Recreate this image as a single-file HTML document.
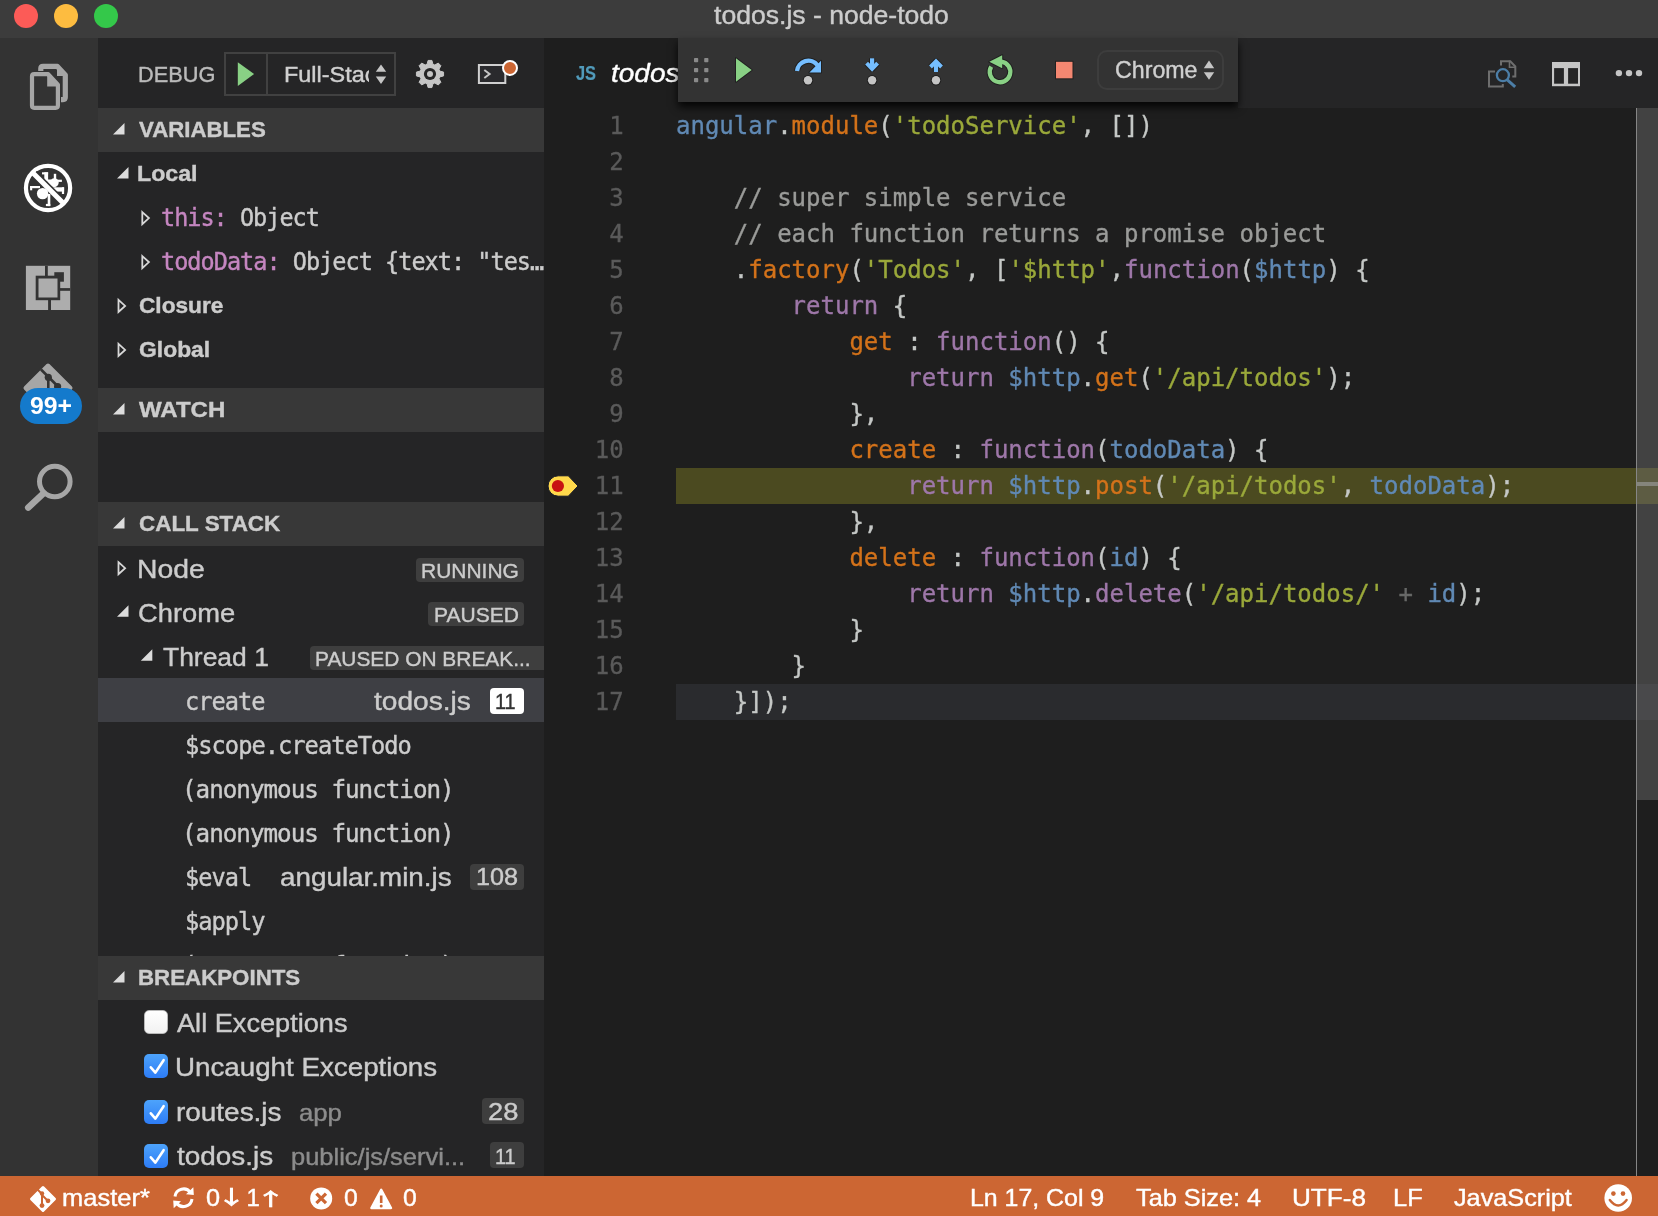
<!DOCTYPE html>
<html lang="en">
<head>
<meta charset="utf-8">
<title>todos.js - node-todo</title>
<style>
html,body{margin:0;padding:0;}
body{will-change:transform;width:1658px;height:1216px;overflow:hidden;position:relative;background:#1e1e1e;font-family:"Liberation Sans",sans-serif;color:#cccccc;}
*{box-sizing:border-box;}
.b{position:absolute;}
.t{position:absolute;white-space:nowrap;line-height:1;transform-origin:0 50%;-webkit-text-stroke:0.4px;}
svg{position:absolute;overflow:visible;}
.hdr{position:absolute;left:98px;width:446px;height:44px;background:#383838;}
.lbl{position:absolute;background:#3e3e3e;border-radius:4px;}
.cl{position:absolute;left:676px;height:36px;line-height:36px;font-family:"DejaVu Sans Mono","Liberation Mono",monospace;font-size:24px;white-space:pre;color:#c5c8c6;-webkit-text-stroke:0.35px;}
.ln{position:absolute;left:558.7px;width:65px;text-align:right;height:36px;line-height:36px;font-family:"DejaVu Sans Mono","Liberation Mono",monospace;font-size:24px;color:#5a5a5a;-webkit-text-stroke:0.3px;}
.v{color:#6089b4}.f{color:#d3721a}.s{color:#9aa83a}.k{color:#9e77a9}.c{color:#9a9b99}.o{color:#676867}
.cb{position:absolute;left:144px;width:24px;height:24px;border-radius:5px;}
.cb.on{background:linear-gradient(#4da3fb,#2d7cf6);}
.cb.off{background:linear-gradient(#ffffff,#f2f2f2);border:1px solid #b8b8b8;}
</style>
</head>
<body>
<!-- title bar -->
<div class="b" style="left:0;top:0;width:1658px;height:38px;background:#3c3c3c"></div>
<div class="b" style="left:14px;top:4px;width:24px;height:24px;border-radius:50%;background:#fc5b57"></div>
<div class="b" style="left:54px;top:4px;width:24px;height:24px;border-radius:50%;background:#fdbc40"></div>
<div class="b" style="left:94px;top:4px;width:24px;height:24px;border-radius:50%;background:#34c84a"></div>
<!-- activity bar -->
<div class="b" style="left:0;top:38px;width:98px;height:1138px;background:#333333"></div>
<svg style="left:0;top:0" width="98" height="1216" viewBox="0 0 98 1216">
<path d="M40.8 71 V68.6 Q40.8 66.4 43 66.4 H57.4 L65.3 75 V97.3 Q65.3 99.6 63 99.6 H61" fill="none" stroke="#a6a6a6" stroke-width="5.2" stroke-linejoin="round"/>
<path d="M57 64.5 L67.5 76 H57 Z" fill="#a6a6a6"/>
<path d="M34.2 74.2 H48.2 L57.9 84.6 V105.6 Q57.9 107.8 55.7 107.8 H34.2 Q32 107.8 32 105.6 V76.4 Q32 74.2 34.2 74.2 Z" fill="#333333" stroke="#a6a6a6" stroke-width="4.2" stroke-linejoin="round"/>
<path d="M47.2 73 V86.6 H59.5 Z" fill="#a6a6a6"/>

<circle cx="48.05" cy="188" r="22.1" fill="none" stroke="#ffffff" stroke-width="4.2"/>
<g fill="#ffffff" stroke="none">
<circle cx="42.6" cy="193.6" r="5.7"/>
<circle cx="54.3" cy="182.6" r="4.4"/>
<rect x="30.1" y="186" width="9.90" height="2.20"/><rect x="30.1" y="186" width="2.10" height="4.30"/>
<rect x="47.7" y="194" width="2.60" height="12.10"/><rect x="45.9" y="203.9" width="4.40" height="2.20"/>
<rect x="44.3" y="172.3" width="3.80" height="9.20"/><rect x="42" y="172.3" width="6.10" height="2.10"/>
<rect x="53.8" y="173.8" width="2.40" height="6.20"/>
<rect x="55" y="179.7" width="6.90" height="2.20"/>
<rect x="53" y="187.3" width="11.10" height="4.30"/><rect x="61.9" y="187.3" width="2.20" height="6.70"/>
<path d="M46 179.5 L51 179.5 L56 187.5 L50 186 Z"/>
</g>
<line x1="35.6" y1="172.2" x2="62.6" y2="199.2" stroke="#333333" stroke-width="3.2"/>
<line x1="33" y1="173" x2="63.1" y2="203.1" stroke="#ffffff" stroke-width="5"/>

<rect x="25.9" y="265.8" width="44.3" height="44.2" fill="#adadad"/>
<g fill="#333333">
<rect x="45.0" y="265.8" width="2.80" height="10.20"/>
<rect x="54.3" y="272.2" width="9.60" height="9.50"/>
<rect x="60" y="288.1" width="10.20" height="2.70"/>
<rect x="48.1" y="300" width="2.90" height="10.00"/>
<rect x="35.7" y="275.7" width="24.50" height="24.50"/>
</g>
<rect x="38.5" y="278.5" width="19" height="19" fill="#adadad"/>

<path d="M48 365.5 L70.5 388 L48 410.5 L25.5 388 Z" fill="#a6a6a6" stroke="#a6a6a6" stroke-width="4" stroke-linejoin="round"/>
<g stroke="#333333" stroke-width="2.6" fill="none"><path d="M41 369.5 L58 386.5"/><path d="M48.3 377 V400"/></g>
<circle cx="48.3" cy="377.3" r="3.6" fill="#333333"/><circle cx="57.6" cy="386.6" r="3.6" fill="#333333"/>
<rect x="20" y="388" width="62" height="36" rx="18" fill="#147acc"/>

<circle cx="54.8" cy="481.5" r="15.3" fill="none" stroke="#a6a6a6" stroke-width="5"/>
<line x1="43.2" y1="493.6" x2="28.2" y2="507.6" stroke="#a6a6a6" stroke-width="6.5" stroke-linecap="round"/>
</svg>
<!-- sidebar -->
<div class="b" style="left:98px;top:38px;width:446px;height:1138px;background:#252526"></div>
<div class="hdr" style="top:108px"></div>
<div class="hdr" style="top:388px"></div>
<div class="hdr" style="top:502px"></div>
<div class="b" style="left:98px;top:678px;width:446px;height:44px;background:#3e3f44"></div>
<!-- debug start box -->
<div class="b" style="left:224px;top:51.8px;width:172.2px;height:44px;border:2px solid #414141"></div>
<div class="b" style="left:266px;top:52px;width:2px;height:43.6px;background:#414141"></div>
<div class="b" style="left:0;top:0;width:368.8px;height:110px;overflow:hidden"><div class="t" style="left:284.4px;top:64px;font-size:22px;color:#d0d0d0;transform:scaleX(1.064);">Full-Stack</div></div>
<svg style="left:0;top:0" width="560" height="110" viewBox="0 0 560 110">
<path d="M237.8 62.2 V86 L254.1 74.1 Z" fill="#89d185"/>
<path d="M381 64.4 L386.2 71.7 H375.8 Z M381 83.9 L386.2 76.6 H375.8 Z" fill="#c5c5c5"/>
<path d="M427.08 64.23 L428.09 60.43 L431.91 60.43 L432.92 64.23 L434.85 65.03 L438.24 63.06 L440.94 65.76 L438.97 69.15 L439.77 71.08 L443.57 72.09 L443.57 75.91 L439.77 76.92 L438.97 78.85 L440.94 82.24 L438.24 84.94 L434.85 82.97 L432.92 83.77 L431.91 87.57 L428.09 87.57 L427.08 83.77 L425.15 82.97 L421.76 84.94 L419.06 82.24 L421.03 78.85 L420.23 76.92 L416.43 75.91 L416.43 72.09 L420.23 71.08 L421.03 69.15 L419.06 65.76 L421.76 63.06 L425.15 65.03 Z" fill="#c5c5c5" stroke="#c5c5c5" stroke-width="1" stroke-linejoin="round"/><circle cx="430" cy="74" r="6.1" fill="#252526"/><circle cx="430" cy="74" r="3" fill="#c5c5c5"/>
<rect x="478.9" y="65" width="26.4" height="18" fill="#2a2a2d" stroke="#d0d0d0" stroke-width="2"/>
<path d="M484.3 70 L489.6 74 L484.3 78" fill="none" stroke="#c5c5c5" stroke-width="2"/>
<circle cx="510" cy="67.9" r="7" fill="#cc6633" stroke="#ffffff" stroke-width="2"/>
</svg>
<!-- labels -->
<div class="lbl" style="left:416px;top:558px;width:108px;height:24px"></div>
<div class="lbl" style="left:428px;top:602px;width:96px;height:24px"></div>
<div class="lbl" style="left:310px;top:646px;width:240px;height:24px"></div>
<div class="lbl" style="left:490px;top:688px;width:34px;height:25.5px;background:#ffffff"></div>
<div class="lbl" style="left:470px;top:864px;width:54px;height:25.5px"></div>
<div class="t" style="left:714.1px;top:2px;font-size:26px;color:#cccccc;transform:scaleX(1.022);">todos.js - node-todo</div>
<div class="t" style="left:137.5px;top:64px;font-size:22px;color:#bbbbbb;transform:scaleX(0.988);">DEBUG</div>
<div class="t" style="left:138.5px;top:119px;font-size:22px;color:#cccccc;font-weight:bold;transform:scaleX(1.010);">VARIABLES</div>
<div class="t" style="left:138.5px;top:399px;font-size:22px;color:#cccccc;font-weight:bold;transform:scaleX(1.091);">WATCH</div>
<div class="t" style="left:138.5px;top:513px;font-size:22px;color:#cccccc;font-weight:bold;transform:scaleX(1.020);">CALL STACK</div>
<div class="t" style="left:137.4px;top:163px;font-size:22px;color:#cccccc;font-weight:bold;transform:scaleX(1.053);">Local</div>
<div class="t" style="left:138.5px;top:295px;font-size:22px;color:#cccccc;font-weight:bold;transform:scaleX(1.030);">Closure</div>
<div class="t" style="left:138.5px;top:339px;font-size:22px;color:#cccccc;font-weight:bold;transform:scaleX(1.040);">Global</div>
<div class="t" style="left:161.4px;top:206px;font-size:24px;color:#cccccc;font-family:'DejaVu Sans Mono','Liberation Mono',monospace;letter-spacing:-1.0px;transform:scaleX(0.978);"><span style="color:#c586c0">this:</span> Object</div>
<div class="t" style="left:161.4px;top:250px;font-size:24px;color:#cccccc;font-family:'DejaVu Sans Mono','Liberation Mono',monospace;letter-spacing:-1.0px;transform:scaleX(0.980);"><span style="color:#c586c0">todoData:</span> Object {text: "tes…</div>
<div class="t" style="left:136.6px;top:556px;font-size:26px;color:#cccccc;transform:scaleX(1.090);">Node</div>
<div class="t" style="left:137.7px;top:600px;font-size:26px;color:#cccccc;transform:scaleX(1.051);">Chrome</div>
<div class="t" style="left:163.0px;top:644px;font-size:26px;color:#cccccc;transform:scaleX(1.017);">Thread 1</div>
<div class="t" style="left:421.2px;top:561px;font-size:20.8px;color:#cccccc;transform:scaleX(1.008);">RUNNING</div>
<div class="t" style="left:434.2px;top:605px;font-size:20.8px;color:#cccccc;transform:scaleX(1.010);">PAUSED</div>
<div class="t" style="left:314.8px;top:649px;font-size:20.8px;color:#cccccc;transform:scaleX(1.005);">PAUSED ON BREAK...</div>
<div class="t" style="left:184.9px;top:690px;font-size:24px;color:#cccccc;font-family:'DejaVu Sans Mono','Liberation Mono',monospace;letter-spacing:-1.0px;transform:scaleX(0.986);">create</div>
<div class="t" style="left:373.6px;top:688px;font-size:26px;color:#cccccc;transform:scaleX(1.080);">todos.js</div>
<div class="t" style="left:495.4px;top:691px;font-size:22px;color:#333333;transform:scaleX(0.905);">11</div>
<div class="t" style="left:184.9px;top:734px;font-size:24px;color:#cccccc;font-family:'DejaVu Sans Mono','Liberation Mono',monospace;letter-spacing:-1.0px;transform:scaleX(0.988);">$scope.createTodo</div>
<div class="t" style="left:181.8px;top:778px;font-size:24px;color:#cccccc;font-family:'DejaVu Sans Mono','Liberation Mono',monospace;letter-spacing:-1.0px;transform:scaleX(1.010);">(anonymous function)</div>
<div class="t" style="left:181.8px;top:822px;font-size:24px;color:#cccccc;font-family:'DejaVu Sans Mono','Liberation Mono',monospace;letter-spacing:-1.0px;transform:scaleX(1.010);">(anonymous function)</div>
<div class="t" style="left:184.9px;top:866px;font-size:24px;color:#cccccc;font-family:'DejaVu Sans Mono','Liberation Mono',monospace;letter-spacing:-1.0px;transform:scaleX(0.983);">$eval</div>
<div class="t" style="left:280.2px;top:864px;font-size:26px;color:#cccccc;transform:scaleX(1.070);">angular.min.js</div>
<div class="t" style="left:475.7px;top:866px;font-size:23.4px;color:#cccccc;transform:scaleX(1.078);">108</div>
<div class="t" style="left:184.9px;top:910px;font-size:24px;color:#cccccc;font-family:'DejaVu Sans Mono','Liberation Mono',monospace;letter-spacing:-1.0px;transform:scaleX(0.986);">$apply</div>
<div class="t" style="left:181.8px;top:954px;font-size:24px;color:#cccccc;font-family:'DejaVu Sans Mono','Liberation Mono',monospace;letter-spacing:-1.0px;transform:scaleX(1.010);">(anonymous function)</div>
<svg style="left:0;top:0" width="560" height="1216" viewBox="0 0 560 1216"><polygon points="124.5,123 124.5,134.5 113,134.5" fill="#dcdcdc"/><polygon points="128.5,167 128.5,178.5 117,178.5" fill="#dcdcdc"/><path d="M142.3 212.1 L148.9 218.1 L142.3 224.1 Z" fill="none" stroke="#d8d8d8" stroke-width="1.8" stroke-linejoin="miter"/><path d="M142.3 256.09999999999997 L148.9 262.09999999999997 L142.3 268.09999999999997 Z" fill="none" stroke="#d8d8d8" stroke-width="1.8" stroke-linejoin="miter"/><path d="M118.5 299.9 L125.1 305.9 L118.5 311.9 Z" fill="none" stroke="#d8d8d8" stroke-width="1.8" stroke-linejoin="miter"/><path d="M118.5 343.9 L125.1 349.9 L118.5 355.9 Z" fill="none" stroke="#d8d8d8" stroke-width="1.8" stroke-linejoin="miter"/><polygon points="124.5,403 124.5,414.5 113,414.5" fill="#dcdcdc"/><polygon points="124.5,517 124.5,528.5 113,528.5" fill="#dcdcdc"/><path d="M118.5 562.1999999999999 L125.1 568.1999999999999 L118.5 574.1999999999999 Z" fill="none" stroke="#d8d8d8" stroke-width="1.8" stroke-linejoin="miter"/><polygon points="128.5,605.3 128.5,616.8 117,616.8" fill="#dcdcdc"/><polygon points="152.3,649.3 152.3,660.8 140.8,660.8" fill="#dcdcdc"/></svg>
<!-- breakpoints section -->
<div class="hdr" style="top:956px"></div>
<div class="b" style="left:98px;top:1000px;width:446px;height:176px;background:#252526"></div>
<div class="cb off" style="top:1010px"></div>
<div class="cb on" style="top:1054px"></div>
<div class="cb on" style="top:1100px"></div>
<div class="cb on" style="top:1144px"></div>
<div class="lbl" style="left:482px;top:1098px;width:42px;height:25.5px"></div>
<div class="lbl" style="left:490px;top:1142px;width:34px;height:25.5px"></div>
<svg style="left:0;top:0" width="560" height="1216" viewBox="0 0 560 1216"><path d="M150.8 1067.3 L155.4 1072.6 L163.6 1060.2" fill="none" stroke="#ffffff" stroke-width="2.6" stroke-linecap="round" stroke-linejoin="round"/><path d="M150.8 1113.3 L155.4 1118.6 L163.6 1106.2" fill="none" stroke="#ffffff" stroke-width="2.6" stroke-linecap="round" stroke-linejoin="round"/><path d="M150.8 1157.3 L155.4 1162.6 L163.6 1150.2" fill="none" stroke="#ffffff" stroke-width="2.6" stroke-linecap="round" stroke-linejoin="round"/></svg>
<svg style="left:0;top:0" width="560" height="1216" viewBox="0 0 560 1216"><polygon points="124.5,971 124.5,982.5 113,982.5" fill="#dcdcdc"/></svg>
<!-- editor -->
<div class="b" style="left:544px;top:38px;width:1114px;height:70px;background:#252526"></div>
<div class="b" style="left:544px;top:38px;width:694px;height:70px;background:#1e1e1e"></div>
<div class="t" style="left:575.6px;top:63px;font-size:20.5px;color:#519aba;font-weight:bold;transform:scaleX(0.800);-webkit-text-stroke:0.2px;">JS</div>
<div class="t" style="left:610.6px;top:60px;font-size:26px;color:#ffffff;font-style:italic;transform:scaleX(1.077);">todos.js</div>
<svg style="left:0;top:0" width="1658" height="110" viewBox="0 0 1658 110">
<path d="M1501 65.5 V61.2 H1510.3 L1515.3 66.5 V76.6 H1512.3" fill="none" stroke="#6e6e6e" stroke-width="2"/>
<path d="M1509.5 60.5 V67.3 H1516" fill="none" stroke="#6e6e6e" stroke-width="1.6"/>
<path d="M1495 71.4 H1489 V86.6 H1502.8 V84" fill="none" stroke="#6e6e6e" stroke-width="2"/>
<circle cx="1502.9" cy="75.2" r="6" fill="none" stroke="#4c7ea7" stroke-width="2.3"/>
<line x1="1507.3" y1="79.8" x2="1515.2" y2="86.8" stroke="#4c7ea7" stroke-width="3"/>
<rect x="1552" y="62" width="28" height="24.2" fill="#c5c5c5"/>
<rect x="1554.1" y="68.1" width="9.8" height="15.6" fill="#252526"/>
<rect x="1568.1" y="68.1" width="9.9" height="15.6" fill="#252526"/>
<circle cx="1618.9" cy="73.1" r="3.2" fill="#c5c5c5"/><circle cx="1629" cy="73.1" r="3.2" fill="#c5c5c5"/><circle cx="1639" cy="73.1" r="3.2" fill="#c5c5c5"/>
</svg>
<div class="b" style="left:544px;top:108px;width:1114px;height:1068px;background:#1e1e1e;overflow:hidden"></div>
<div class="b" style="left:676px;top:468px;width:982px;height:36px;background:#4b4a20"></div>
<div class="b" style="left:676px;top:684px;width:982px;height:36px;background:#2a2b2e"></div>
<div class="ln" style="top:108px">1</div><div class="cl" style="top:108px"><span class="v">angular</span>.<span class="f">module</span>(<span class="s">'todoService'</span>, [])</div>
<div class="ln" style="top:144px">2</div><div class="cl" style="top:144px"></div>
<div class="ln" style="top:180px">3</div><div class="cl" style="top:180px">    <span class="c">// super simple service</span></div>
<div class="ln" style="top:216px">4</div><div class="cl" style="top:216px">    <span class="c">// each function returns a promise object</span></div>
<div class="ln" style="top:252px">5</div><div class="cl" style="top:252px">    .<span class="f">factory</span>(<span class="s">'Todos'</span>, [<span class="s">'$http'</span>,<span class="k">function</span>(<span class="v">$http</span>) {</div>
<div class="ln" style="top:288px">6</div><div class="cl" style="top:288px">        <span class="k">return</span> {</div>
<div class="ln" style="top:324px">7</div><div class="cl" style="top:324px">            <span class="f">get</span> : <span class="k">function</span>() {</div>
<div class="ln" style="top:360px">8</div><div class="cl" style="top:360px">                <span class="k">return</span> <span class="v">$http</span>.<span class="f">get</span>(<span class="s">'/api/todos'</span>);</div>
<div class="ln" style="top:396px">9</div><div class="cl" style="top:396px">            },</div>
<div class="ln" style="top:432px">10</div><div class="cl" style="top:432px">            <span class="f">create</span> : <span class="k">function</span>(<span class="v">todoData</span>) {</div>
<div class="ln" style="top:468px">11</div><div class="cl" style="top:468px">                <span class="k">return</span> <span class="v">$http</span>.<span class="f">post</span>(<span class="s">'/api/todos'</span>, <span class="v">todoData</span>);</div>
<div class="ln" style="top:504px">12</div><div class="cl" style="top:504px">            },</div>
<div class="ln" style="top:540px">13</div><div class="cl" style="top:540px">            <span class="f">delete</span> : <span class="k">function</span>(<span class="v">id</span>) {</div>
<div class="ln" style="top:576px">14</div><div class="cl" style="top:576px">                <span class="k">return</span> <span class="v">$http</span>.<span class="k">delete</span>(<span class="s">'/api/todos/'</span> <span class="o">+</span> <span class="v">id</span>);</div>
<div class="ln" style="top:612px">15</div><div class="cl" style="top:612px">            }</div>
<div class="ln" style="top:648px">16</div><div class="cl" style="top:648px">        }</div>
<div class="ln" style="top:684px">17</div><div class="cl" style="top:684px">    }]);</div>

<svg style="left:0;top:0" width="700" height="600" viewBox="0 0 700 600">
<path d="M558.2 475.8 H568.3 L578 486 L568.3 496.2 H558.2 A10.2 10.2 0 0 1 558.2 475.8 Z" fill="#ffd84b" stroke="#141828" stroke-width="1"/>
<circle cx="557.9" cy="486" r="6.1" fill="#c81212"/>
</svg>
<!-- scrollbar -->
<div class="b" style="left:1636px;top:108px;width:22px;height:692px;background:rgba(121,121,121,0.4)"></div>
<div class="b" style="left:1636px;top:482px;width:22px;height:4px;background:#85857c"></div>
<div class="b" style="left:1635.8px;top:108px;width:1.3px;height:1068px;background:#868686"></div>
<!-- debug toolbar -->
<div class="b" style="left:678px;top:38px;width:560px;height:63.5px;background:#333333;box-shadow:0 5px 8px rgba(0,0,0,0.85)"></div>
<div class="b" style="left:1096.5px;top:50px;width:127px;height:39.7px;border:2px solid #3d3d3d;border-radius:10px"></div>
<svg style="left:0;top:0" width="1300" height="110" viewBox="0 0 1300 110">
<rect x="694" y="58" width="4.2" height="4.2" rx="0.8" fill="#8a8a8a"/><rect x="694" y="68" width="4.2" height="4.2" rx="0.8" fill="#8a8a8a"/><rect x="694" y="78" width="4.2" height="4.2" rx="0.8" fill="#8a8a8a"/><rect x="704.2" y="58" width="4.2" height="4.2" rx="0.8" fill="#8a8a8a"/><rect x="704.2" y="68" width="4.2" height="4.2" rx="0.8" fill="#8a8a8a"/><rect x="704.2" y="78" width="4.2" height="4.2" rx="0.8" fill="#8a8a8a"/>
<g fill="none" stroke="#202020" stroke-linejoin="round">
<path d="M797 71 A11.4 11.4 0 0 1 817.5 65.3" stroke-width="6.3"/>
<path d="M821 60.8 V72.5 H809.4 Z" stroke-width="2" fill="#202020"/>
<circle cx="808" cy="80.2" r="5.2" fill="#202020" stroke="none"/>
<path d="M872.1 58.3 V68" stroke-width="6.2"/><path d="M866.6 63.2 L872.1 68.8 L877.6 63.2" stroke-width="6"/>
<circle cx="872.1" cy="80.2" r="5.2" fill="#202020" stroke="none"/>
<path d="M936 72 V62" stroke-width="6.2"/><path d="M930.5 67 L936 61.4 L941.5 67" stroke-width="6"/>
<circle cx="936" cy="80.2" r="5.2" fill="#202020" stroke="none"/>
<path d="M1001.5 61.7 A10.3 10.3 0 1 1 991.2 66.6" stroke-width="6.3"/>
<path d="M989.3 61.8 L1002.2 55.2 V68.2 Z" stroke-width="2" fill="#202020"/>
<rect x="1055" y="60.8" width="18.5" height="18.5" fill="#202020" stroke="none"/>
<path d="M736 58.2 V81.7 L751.7 70 Z" stroke-width="2" fill="#202020"/>
</g>
<path d="M736 58.2 V81.7 L751.7 70 Z" fill="#89d185"/>
<path d="M797 71 A11.4 11.4 0 0 1 817.5 65.3" fill="none" stroke="#75beff" stroke-width="4.3"/>
<path d="M821 60.8 V72.5 H809.4 Z" fill="#75beff"/>
<circle cx="808" cy="80.2" r="4.2" fill="#c5c5c5"/><path d="M872.1 58.3 V68" fill="none" stroke="#75beff" stroke-width="4.2"/>
<path d="M866.6 63.2 L872.1 68.8 L877.6 63.2" fill="none" stroke="#75beff" stroke-width="4"/>
<circle cx="872.1" cy="80.2" r="4.2" fill="#c5c5c5"/><path d="M936 72 V62" fill="none" stroke="#75beff" stroke-width="4.2"/>
<path d="M930.5 67 L936 61.4 L941.5 67" fill="none" stroke="#75beff" stroke-width="4"/>
<circle cx="936" cy="80.2" r="4.2" fill="#c5c5c5"/><path d="M1001.5 61.7 A10.3 10.3 0 1 1 991.2 66.6" fill="none" stroke="#89d185" stroke-width="4.3"/>
<path d="M989.3 61.8 L1002.2 55.2 V68.2 Z" fill="#89d185"/>
<rect x="1056" y="61.8" width="16.5" height="16.5" fill="#f48771"/>
<path d="M1209 60.5 L1214.2 68.2 H1203.8 Z M1209 79.8 L1214.2 72.3 H1203.8 Z" fill="#c5c5c5"/>
</svg>
<!-- status bar -->
<div class="b" style="left:0;top:1176px;width:1658px;height:40px;background:#cc6633"></div>
<svg style="left:0;top:0" width="1658" height="1216" viewBox="0 0 1658 1216">
<path d="M43 1187.5 L54.5 1199 L43 1210.5 L31.5 1199 Z" fill="#ffffff" stroke="#ffffff" stroke-width="3" stroke-linejoin="round"/>
<g stroke="#cc6633" stroke-width="2" fill="none"><path d="M42 1192 V1206"/><path d="M37.5 1189.5 L42 1194"/><path d="M42 1195 L47.5 1200.5"/></g>
<circle cx="42" cy="1205.6" r="2.4" fill="#cc6633"/><circle cx="48" cy="1200.8" r="2.4" fill="#cc6633"/><circle cx="42" cy="1193.5" r="2.2" fill="#cc6633"/>
<g fill="none" stroke="#ffffff" stroke-width="3">
<path d="M175 1196.5 A8.6 8.6 0 0 1 190.5 1192.5"/>
<path d="M192 1199 A8.6 8.6 0 0 1 176.5 1203"/>
</g>
<path d="M186 1194.3 L193.8 1195 L193.3 1187.2 Z" fill="#ffffff"/>
<path d="M181 1201.2 L173.2 1200.5 L173.7 1208.3 Z" fill="#ffffff"/>
<circle cx="321.2" cy="1198.4" r="11" fill="#ffffff"/>
<path d="M316.4 1193.6 L326 1203.2 M326 1193.6 L316.4 1203.2" stroke="#cc6633" stroke-width="3.2" fill="none"/>
<path d="M381.2 1189.8 L391 1208 H371.4 Z" fill="#ffffff" stroke="#ffffff" stroke-width="2.4" stroke-linejoin="round"/>
<path d="M381.2 1195.5 V1203" stroke="#cc6633" stroke-width="2.6" fill="none"/><circle cx="381.2" cy="1206" r="1.5" fill="#cc6633"/>
<circle cx="1618.2" cy="1198" r="13.8" fill="#ffffff"/>
<circle cx="1613.4" cy="1193.6" r="2.3" fill="#cc6633"/><circle cx="1623" cy="1193.6" r="2.3" fill="#cc6633"/>
<path d="M1609.8 1200 Q1618.2 1211 1626.6 1200" fill="none" stroke="#cc6633" stroke-width="2.4" stroke-linecap="round"/>
</svg>
<div class="t" style="left:137.5px;top:967px;font-size:22px;color:#cccccc;font-weight:bold;transform:scaleX(1.013);">BREAKPOINTS</div>
<div class="t" style="left:176.8px;top:1010px;font-size:26px;color:#cccccc;transform:scaleX(1.044);">All Exceptions</div>
<div class="t" style="left:174.7px;top:1054px;font-size:26px;color:#cccccc;transform:scaleX(1.067);">Uncaught Exceptions</div>
<div class="t" style="left:175.7px;top:1099px;font-size:26px;color:#cccccc;transform:scaleX(1.074);">routes.js</div>
<div class="t" style="left:299.2px;top:1102px;font-size:23.4px;color:#8c8c8c;transform:scaleX(1.100);">app</div>
<div class="t" style="left:487.5px;top:1101px;font-size:23.4px;color:#cccccc;transform:scaleX(1.167);">28</div>
<div class="t" style="left:176.8px;top:1143px;font-size:26px;color:#cccccc;transform:scaleX(1.074);">todos.js</div>
<div class="t" style="left:291.1px;top:1146px;font-size:23.4px;color:#8c8c8c;transform:scaleX(1.089);">public/js/servi...</div>
<div class="t" style="left:495.4px;top:1146px;font-size:22px;color:#cccccc;transform:scaleX(0.905);">11</div>
<div class="t" style="left:29.7px;top:394px;font-size:24px;color:#ffffff;font-weight:bold;transform:scaleX(1.031);-webkit-text-stroke:0;">99+</div>
<div class="t" style="left:1114.5px;top:58px;font-size:24.5px;color:#d0d0d0;transform:scaleX(0.947);">Chrome</div>
<div class="t" style="left:61.9px;top:1186px;font-size:24px;color:#ffffff;transform:scaleX(1.062);">master*</div>
<div class="t" style="left:206.1px;top:1186px;font-size:24px;color:#ffffff;transform:scaleX(1.054);">0</div>
<div class="t" style="left:216.8px;top:1184px;font-size:24px;color:#ffffff;font-family:'Noto Sans CJK SC',sans-serif;transform:scale(1.208,0.8);-webkit-text-stroke:0.9px;">↓</div>
<div class="t" style="left:246.5px;top:1186px;font-size:24px;color:#ffffff;">1</div>
<div class="t" style="left:255.5px;top:1187px;font-size:24px;color:#ffffff;font-family:'Noto Sans CJK SC',sans-serif;transform:scale(1.225,0.74);-webkit-text-stroke:0.9px;">↑</div>
<div class="t" style="left:344.0px;top:1186px;font-size:24px;color:#ffffff;transform:scaleX(1.031);">0</div>
<div class="t" style="left:402.6px;top:1186px;font-size:24px;color:#ffffff;transform:scaleX(1.031);">0</div>
<div class="t" style="left:970.1px;top:1186px;font-size:24px;color:#ffffff;transform:scaleX(1.037);">Ln 17, Col 9</div>
<div class="t" style="left:1135.6px;top:1186px;font-size:24px;color:#ffffff;transform:scaleX(1.054);">Tab Size: 4</div>
<div class="t" style="left:1291.5px;top:1186px;font-size:24px;color:#ffffff;transform:scaleX(1.089);">UTF-8</div>
<div class="t" style="left:1393.4px;top:1186px;font-size:24px;color:#ffffff;transform:scaleX(1.060);">LF</div>
<div class="t" style="left:1453.5px;top:1186px;font-size:24px;color:#ffffff;transform:scaleX(1.052);">JavaScript</div>
</body>
</html>
